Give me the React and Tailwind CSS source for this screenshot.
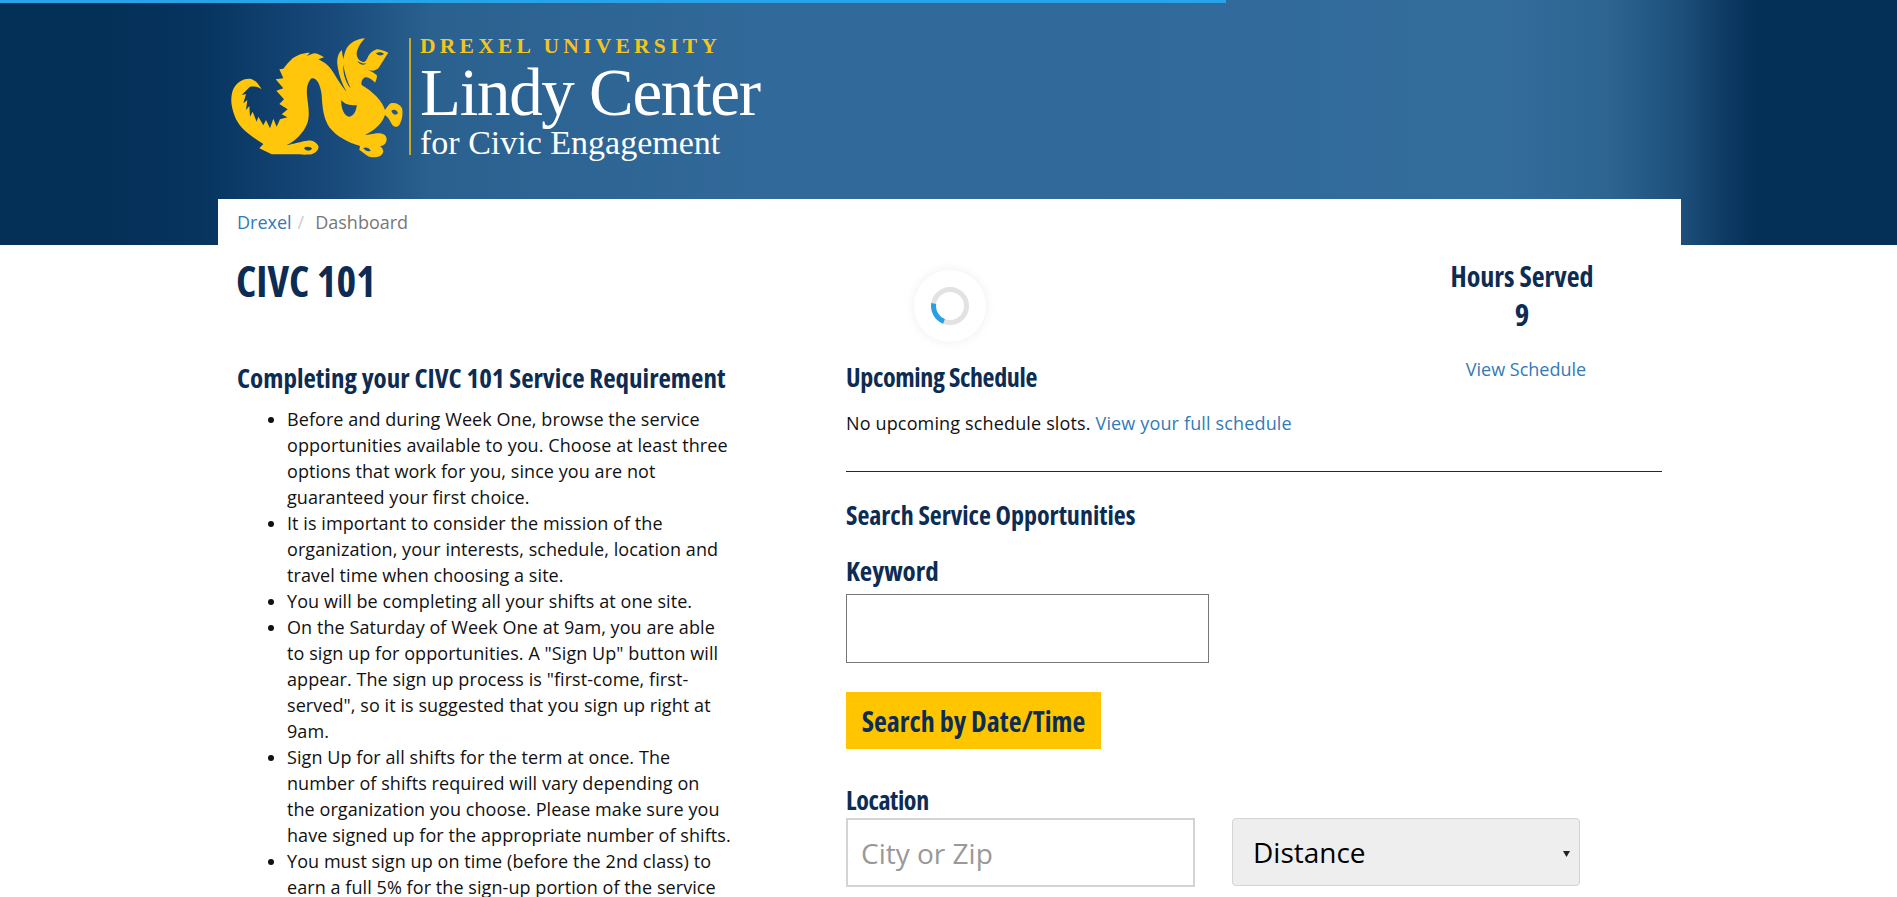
const HEAD = "font-['Open_Sans',sans-serif] [font-stretch:75%] font-bold text-[#0d2c54]";

const STEPS = [
  'Before and during Week One, browse the service opportunities available to you. Choose at least three options that work for you, since you are not guaranteed your first choice.',
  'It is important to consider the mission of the organization, your interests, schedule, location and travel time when choosing a site.',
  'You will be completing all your shifts at one site.',
  'On the Saturday of Week One at 9am, you are able to sign up for opportunities. A "Sign Up" button will appear. The sign up process is "first-come, first-served", so it is suggested that you sign up right at 9am.',
  'Sign Up for all shifts for the term at once. The number of shifts required will vary depending on the organization you choose. Please make sure you have signed up for the appropriate number of shifts.',
  'You must sign up on time (before the 2nd class) to earn a full 5% for the sign-up portion of the service',
];

const Dragon = () => (
  <svg viewBox="0 0 720 450" className="w-[240px] h-[150px] shrink-0">
    <path
      fill="#ffc60b"
      fillRule="evenodd"
      d="M185 208C175 190 165 178 148 176C125 176 105 190 97 215C90 240 95 265 105 290C115 315 135 338 190 372L178 385L215 403H300C310 405 325 404 335 403C345 398 358 390 355 378C350 366 335 360 322 362C305 364 280 372 260 375C285 365 310 340 322 310C330 285 325 260 322 235C318 210 322 185 335 175C350 172 362 195 365 225C367 260 370 295 388 322C410 350 445 368 480 378L478 390C488 395 495 405 510 411C525 413 545 412 550 395C550 388 545 382 540 378C550 380 560 370 560 358C560 345 548 338 530 340C518 342 505 345 495 345C520 332 545 315 555 285C562 290 570 300 575 312C580 320 590 325 598 315C606 302 610 280 606 265C600 252 585 246 572 250C566 255 560 262 555 270C548 245 520 215 485 195C482 185 488 175 495 172C508 172 518 180 525 188C530 178 532 170 530 165C522 158 512 154 505 150C520 155 530 150 535 145C545 130 555 112 565 98C552 92 540 88 530 88C518 92 510 100 505 108C500 120 495 128 488 126C478 122 470 115 470 100C472 85 482 68 495 55C475 55 450 68 440 85C435 95 432 105 430 118C428 108 427 98 425 90C415 100 410 115 412 132C415 160 425 190 440 215C425 200 415 180 395 150C385 135 370 125 355 118L372 112C362 105 352 100 342 100L320 108L330 98C310 98 290 105 278 115C268 125 258 135 250 146L238 148L250 175L227 178L250 205L229 212L252 238L238 252L263 268L245 283L262 292L240 298L230 320L220 296L210 325L198 300L190 316L175 290L170 305L158 275L150 290L148 258L138 270L142 240L130 250L138 222L125 225L150 200C160 198 175 200 185 208ZM424 240C432 250 445 258 470 255C470 270 462 288 448 290C432 288 422 262 424 240ZM528 100C535 95 548 97 552 102C546 108 534 108 528 100ZM430 135C434 160 442 185 452 205C438 190 428 160 430 135ZM312 384C320 378 332 380 336 386C330 394 318 394 312 384ZM490 384C498 380 508 384 512 392C504 396 494 392 490 384ZM574 272C582 266 592 270 594 280C588 288 578 284 574 272ZM472 122C480 128 490 132 500 130C492 138 478 134 472 122Z"
    />
  </svg>
);

export default function App() {
  return (
    <div className="relative h-[897px] overflow-hidden bg-white font-['Open_Sans',sans-serif] text-[18px] leading-[26px] text-[#111]">
      {/* page load bar */}
      <div className="absolute left-0 top-0 z-10 h-[3px] w-[1226px] bg-[#29a3e8]" />

      <header className="h-[245px] bg-[linear-gradient(90deg,#042f57_0,#042f57_110px,#073560_204px,#18497a_331px,#2a618f_433px,#31699a_765px,#30699a_1100px,#336d9c_1500px,#2d6591_1608px,#1d4f7a_1681px,#0f3d66_1720px,#042f57_1756px,#042f57_100%)]">
        <div className="ml-[218px] flex h-full w-[1463px] flex-col">
          <div className="flex h-[199px] items-start pt-[20px]">
            <div className="ml-[-18px]">
              <Dragon />
            </div>
            <div className="ml-[-31px] mt-[18px] h-[117px] w-[2px] bg-[#c8a62c]" />
            <div className="ml-[9px] flex flex-col pt-[14px] font-['Liberation_Serif',serif] text-white">
              <span className="text-[21.5px] font-bold leading-[24px] tracking-[4.25px] text-[#f4c51c]">DREXEL UNIVERSITY</span>
              <span className="mt-[1px] text-[67px] leading-[66px] tracking-[-1.3px]">Lindy Center</span>
              <span className="text-[34px] leading-[36px]">for Civic Engagement</span>
            </div>
          </div>
          <nav className="flex h-[46px] items-center gap-[6px] bg-white pl-[19px] text-[#777]">
            <a className="text-[#337ab7]">Drexel</a>
            <span className="text-[#ccc]">/</span>
            <span className="ml-[5px]">Dashboard</span>
          </nav>
        </div>
      </header>

      <main className="ml-[218px] w-[1463px] px-[20px]">
        <div className="flex h-[112px] items-start justify-between">
          <h1 className={`${HEAD} ml-[-2px] mt-[12px] text-[42px] leading-[48px]`}>CIVC 101</h1>
          <div className="mr-[68px] mt-[12px] flex w-[142px] flex-col items-center">
            <span className={`${HEAD} whitespace-nowrap text-[28px] leading-[38px]`}>Hours Served</span>
            <span className={`${HEAD} text-[31px] leading-[38px]`}>9</span>
            <a className="ml-[8px] mt-[23px] whitespace-nowrap text-[#337ab7]">View Schedule</a>
          </div>
        </div>

        <div className="flex">
          <section className="w-[493px] shrink-0 tracking-[0.07px]">
            <h2 className={`${HEAD} ml-[-1px] mt-[3px] text-[27px] leading-[36px] tracking-normal whitespace-nowrap`}>Completing your CIVC 101 Service Requirement</h2>
            <ul className="mt-[10px] list-disc pl-[49px]">
              {STEPS.map((step) => (
                <li key={step}>{step}</li>
              ))}
            </ul>
          </section>

          <section className="ml-[115px] mr-[-1px] flex-1">
            <h2 className={`${HEAD} mt-[2px] text-[26px] leading-[36px] tracking-[-0.35px]`}>Upcoming Schedule</h2>
            <p className="mt-[15px] tracking-[0.15px]">
              No upcoming schedule slots. <a className="text-[#337ab7]">View your full schedule</a>
            </p>
            <hr className="mt-[35px] border-[#0d2c54]" />
            <h2 className={`${HEAD} mt-[25px] text-[26px] leading-[36px]`}>Search Service Opportunities</h2>
            <label className={`${HEAD} mt-[20px] block text-[27px] leading-[36px]`}>Keyword</label>
            <input className="mt-[5px] block h-[69px] w-[363px] border border-[#767676] bg-white" />
            <button className={`${HEAD} mt-[29px] block h-[57px] w-[255px] whitespace-nowrap bg-[#ffc600] text-[28px] leading-[36px]`}>
              Search by Date/Time
            </button>
            <label className={`${HEAD} mt-[34px] block text-[26px] leading-[35px] tracking-[-0.4px]`}>Location</label>
            <div className="flex items-start gap-[37px]">
              <input
                placeholder="City or Zip"
                className="h-[69px] w-[349px] border-2 border-[#d4d4d4] bg-white pl-[13px] text-[28px] placeholder:text-[#999]"
              />
              <div className="relative flex h-[68px] w-[348px] items-center rounded-[4px] border border-[#d4d4d4] bg-[#eee] pl-[20px] text-[28px] text-black">
                Distance
                <svg viewBox="0 0 8 8" className="absolute right-[9px] top-[31px] h-[7px] w-[7px]">
                  <path d="M0 1h8L4 8z" fill="#222" />
                </svg>
              </div>
            </div>
          </section>
        </div>
      </main>

      {/* loading spinner */}
      <div className="absolute left-[914px] top-[270px] flex h-[72px] w-[72px] items-center justify-center rounded-full bg-white shadow-[0_0_12px_rgba(0,0,0,0.07)]">
        <svg viewBox="0 0 38 38" className="h-[38px] w-[38px]">
          <circle cx="19" cy="19" r="16.5" fill="none" stroke="#e2e2e2" strokeWidth="5" />
          <path d="M2.7 16.5A16.5 16.5 0 0 0 13 34.4" fill="none" stroke="#29a0e4" strokeWidth="5" />
        </svg>
      </div>
    </div>
  );
}
